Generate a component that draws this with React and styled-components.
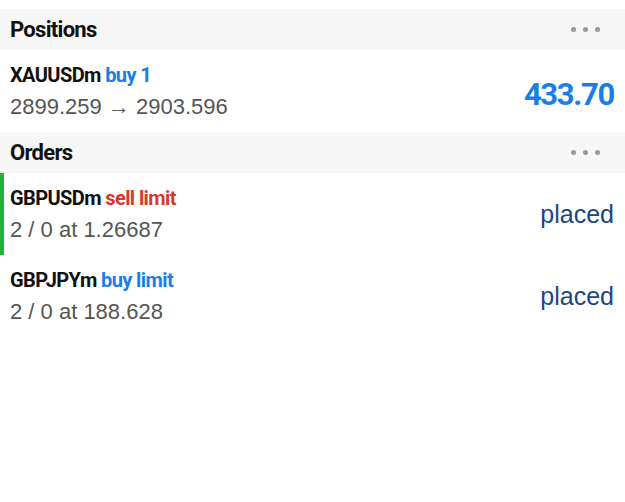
import React from "react";
import styled, { createGlobalStyle } from "styled-components";

const GlobalStyle = createGlobalStyle`
  body {
    margin: 0;
    background: #fff;
    font-family: "Liberation Sans", Arial, sans-serif;
  }
`;

const POSITIONS = [
  { symbol: "XAUUSDm", side: "buy 1", from: "2899.259", to: "2903.596", profit: "433.70" },
];

const ORDERS = [
  { symbol: "GBPUSDm", type: "sell limit", sell: true, info: "2 / 0 at 1.26687", state: "placed", active: true },
  { symbol: "GBPJPYm", type: "buy limit", sell: false, info: "2 / 0 at 188.628", state: "placed" },
];

const Section = ({ title, children }) => (
  <>
    <Header>
      <HeaderTitle>{title}</HeaderTitle>
      <Dots>
        <span />
        <span />
        <span />
      </Dots>
    </Header>
    {children}
  </>
);

const App = () => {
  return (
    <Page>
      <GlobalStyle />
      <Section title="Positions">
        {POSITIONS.map(p => (
          <Row key={p.symbol}>
            <Left>
              <Title>
                {p.symbol} <Side>{p.side}</Side>
              </Title>
              <Sub>
                {p.from} → {p.to}
              </Sub>
            </Left>
            <Profit>{p.profit}</Profit>
          </Row>
        ))}
      </Section>
      <Section title="Orders">
        {ORDERS.map(o => (
          <Row key={o.symbol} $active={o.active}>
            <Left>
              <Title>
                {o.symbol} <Side $sell={o.sell}>{o.type}</Side>
              </Title>
              <Sub>{o.info}</Sub>
            </Left>
            <State>{o.state}</State>
          </Row>
        ))}
      </Section>
    </Page>
  );
};

export default App;

const bold = `"Roboto", "Liberation Sans", sans-serif`;

const Page = styled.div`
  width: 625px;
  height: 502px;
  padding-top: 9px;
  box-sizing: border-box;
  background: #fff;
`;

const Header = styled.div`
  height: 41px;
  background: #f7f7f7;
  display: flex;
  align-items: center;
  justify-content: space-between;
  padding: 0 25px 0 10px;
`;

const HeaderTitle = styled.div`
  font-family: ${bold};
  font-weight: 700;
  font-size: 22px;
  color: #111;
  letter-spacing: -0.7px;
`;

const Dots = styled.div`
  display: flex;
  gap: 7px;
  span {
    width: 5px;
    height: 5px;
    border-radius: 50%;
    background: #9a9a9a;
  }
`;

const Row = styled.div`
  height: 82px;
  display: flex;
  align-items: center;
  justify-content: space-between;
  padding: 0 11px 0 10px;
  box-shadow: ${props => (props.$active ? "inset 4px 0 0 #22b33a" : "none")};
`;

const Left = styled.div`
  display: flex;
  flex-direction: column;
  gap: 7px;
`;

const Title = styled.div`
  font-family: ${bold};
  font-weight: 700;
  font-size: 20px;
  color: #111;
  letter-spacing: -0.6px;
`;

const Side = styled.span`
  color: ${props => (props.$sell ? "#d8392f" : "#1a7ee6")};
`;

const Sub = styled.div`
  font-size: 22px;
  color: #555;
`;

const Profit = styled.div`
  font-family: ${bold};
  font-weight: 700;
  font-size: 31px;
  color: #1a7ee6;
  letter-spacing: -1.3px;
  margin-top: 6px;
`;

const State = styled.div`
  font-size: 25px;
  color: #1d4585;
`;
